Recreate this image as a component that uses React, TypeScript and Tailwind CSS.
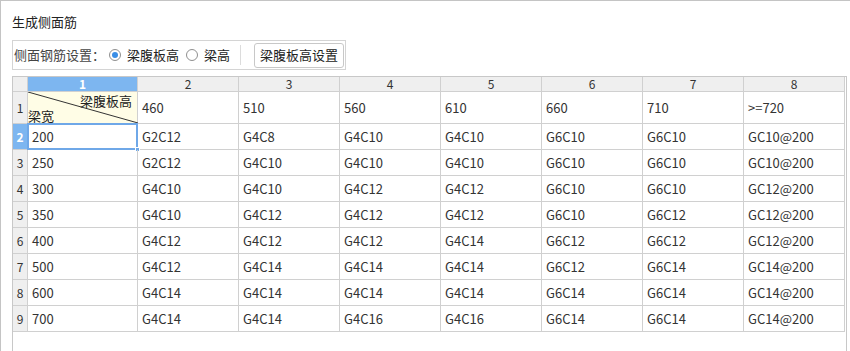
import React from "react";

const FONT = { fontFamily: '"Microsoft YaHei", "Noto Sans CJK SC", "Noto Sans", sans-serif' };

const heights = ["460", "510", "560", "610", "660", "710", ">=720"];

const rows: [string, string[]][] = [
  ["200", ["G2C12", "G4C8", "G4C10", "G4C10", "G6C10", "G6C10", "GC10@200"]],
  ["250", ["G2C12", "G4C10", "G4C10", "G4C10", "G6C10", "G6C10", "GC10@200"]],
  ["300", ["G4C10", "G4C10", "G4C12", "G4C12", "G6C10", "G6C10", "GC12@200"]],
  ["350", ["G4C10", "G4C12", "G4C12", "G4C12", "G6C10", "G6C12", "GC12@200"]],
  ["400", ["G4C12", "G4C12", "G4C12", "G4C14", "G6C12", "G6C12", "GC12@200"]],
  ["500", ["G4C12", "G4C14", "G4C14", "G4C14", "G6C12", "G6C14", "GC14@200"]],
  ["600", ["G4C14", "G4C14", "G4C14", "G4C14", "G6C14", "G6C14", "GC14@200"]],
  ["700", ["G4C14", "G4C14", "G4C16", "G4C16", "G6C14", "G6C14", "GC14@200"]],
];

const cols = "grid grid-cols-[15px_110px_101px_101px_101px_101px_101px_101px_101px]";

function Radio({ checked, label, width }: { checked: boolean; label: string; width: string }) {
  return (
    <label className={`flex items-center gap-[6px] whitespace-nowrap shrink-0 ${width}`}>
      <span className="w-[12px] h-[12px] shrink-0 rounded-full border border-[#8f8f8f] bg-white flex items-center justify-center">
        {checked && <span className="w-[6px] h-[6px] rounded-full bg-[#3a8ee6]" />}
      </span>
      <span className="text-[#222]">{label}</span>
    </label>
  );
}

export default function App() {
  return (
    <div
      className="w-[850px] h-[351px] bg-white border-l border-t border-[#c4c4c4] overflow-hidden text-[13px] text-[#333]"
      style={FONT}
    >
      <div className="pl-[11px] pt-[11px] h-[39px] leading-[20px] text-[13px] text-[#222]">生成侧面筋</div>

      {/* toolbar */}
      <div className="ml-[11px] w-[334px] h-[30px] border border-[#d4d4d4] flex items-center whitespace-nowrap">
        <span className="pl-[1px] w-[96px] shrink-0 text-[#444]">侧面钢筋设置：</span>
        <Radio checked label="梁腹板高" width="w-[77px]" />
        <Radio checked={false} label="梁高" width="w-[42px]" />
        <div className="ml-[12px] w-px h-[20px] shrink-0 bg-[#dcdcdc]" />
        <button className="ml-[13px] h-[25px] w-[90px] shrink-0 border border-[#c8c8c8] rounded-[3px] bg-white text-[#222] text-[13px]">
          梁腹板高设置
        </button>
      </div>

      {/* spreadsheet */}
      <div className="ml-[11px] mt-[6px] w-[835px] h-[290px] border-l border-t border-r border-[#c8c8c8]">
        {/* column headers */}
        <div className={`${cols} h-[15px]`}>
          <div className="bg-[#efefef] border-r border-b border-[#d0d0d0]" />
          <div className="bg-[#7db6f0] border-r border-b border-[#d0d0d0] text-white font-bold text-[12px] leading-[14px] text-center">
            1
          </div>
          {[2, 3, 4, 5, 6, 7, 8].map((n) => (
            <div
              key={n}
              className="bg-[#efefef] border-r border-b border-[#d0d0d0] text-[12px] leading-[14px] text-center text-[#333]"
            >
              {n}
            </div>
          ))}
        </div>

        {/* header values row */}
        <div className={`${cols} h-[32px]`}>
          <div className="bg-[#efefef] border-r border-b border-[#d0d0d0] flex items-center justify-center text-[12px]">
            1
          </div>
          <div className="relative bg-[#fffde6] border-r border-b border-[#d0d0d0]">
            <svg className="absolute inset-0" width="110" height="31" viewBox="0 0 110 31">
              <line x1="0" y1="0" x2="110" y2="31" stroke="#333" strokeWidth="1" />
            </svg>
            <span className="absolute right-[5px] top-[1px] leading-[15px] text-[#222]">梁腹板高</span>
            <span className="absolute left-[0px] bottom-[0px] leading-[15px] text-[#222]">梁宽</span>
          </div>
          {heights.map((h) => (
            <div key={h} className="border-r border-b border-[#d0d0d0] flex items-center pl-[4px]">
              {h === ">=720" ? <span>&gt;=720</span> : h}
            </div>
          ))}
        </div>

        {/* data rows */}
        {rows.map(([w, vals], i) => {
          const sel = i === 0;
          return (
            <div key={w} className={`${cols} h-[26px]`}>
              <div
                className={
                  sel
                    ? "bg-[#7db6f0] border-r border-b border-[#d0d0d0] flex items-center justify-center text-[12px] text-white font-bold"
                    : "bg-[#efefef] border-r border-b border-[#d0d0d0] flex items-center justify-center text-[12px]"
                }
              >
                {i + 2}
              </div>
              <div className="relative border-r border-b border-[#d0d0d0] flex items-center pl-[4px]">
                {w}
                {sel && (
                  <>
                    <div className="absolute left-[-1px] top-[-1px] right-[-1px] bottom-[-1px] border-2 border-[#6fa8e8]" />
                    <div className="absolute right-[-3px] bottom-[-3px] w-[5px] h-[5px] bg-[#6fa8e8] border border-white" />
                  </>
                )}
              </div>
              {vals.map((v, j) => (
                <div key={j} className="border-r border-b border-[#d0d0d0] flex items-center pl-[4px]">
                  {v}
                </div>
              ))}
            </div>
          );
        })}
      </div>
    </div>
  );
}
